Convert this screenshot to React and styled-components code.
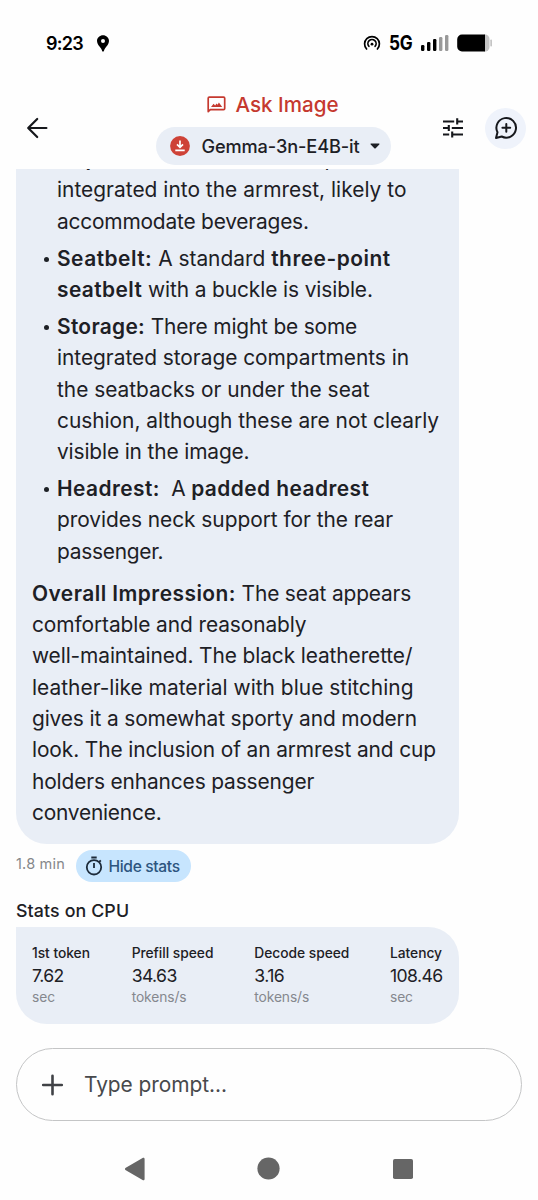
import React from 'react';
import styled, { createGlobalStyle } from 'styled-components';

const Global = createGlobalStyle`
  * { box-sizing: border-box; }
  body { margin: 0; background: #fefefe; }
  svg { display: block; flex: none; }
`;

const Screen = styled.div`
  width: 538px;
  height: 1200px;
  display: flex;
  flex-direction: column;
  overflow: hidden;
  background: #fefefe;
  color: #1d2025;
  font-family: Inter, "Liberation Sans", sans-serif;
`;

/* status bar */
const StatusBar = styled.div`
  height: 86px;
  flex: none;
  padding: 0 45px 0 46px;
  display: flex;
  align-items: center;
  justify-content: space-between;
  color: #000;
`;
const StatusGroup = styled.div`
  display: flex;
  align-items: center;
  gap: ${p => p.$gap}px;
`;
const Clock = styled.span`
  width: 39px;
  font-size: 18px;
  font-weight: 600;
  letter-spacing: -0.7px;
`;
const Network = styled.span`
  width: 24px;
  font-size: 20px;
  font-weight: 700;
  letter-spacing: -0.2px;
  transform: scaleX(0.86);
  transform-origin: left;
  white-space: nowrap;
`;

/* app header */
const Header = styled.header`
  height: 83px;
  flex: none;
  padding-left: 25px;
  display: flex;
  align-items: flex-start;
`;
const IconButton = styled.button`
  border: 0;
  padding: 0;
  width: ${p => p.$size}px;
  height: ${p => p.$size}px;
  display: grid;
  place-items: center;
  border-radius: 50%;
  color: #16181c;
  background: ${p => p.$bg || 'transparent'};
  margin: ${p => p.$margin};
`;
const Center = styled.div`
  width: 235px;
  margin-left: 106.5px;
  display: flex;
  flex-direction: column;
  align-items: center;
`;
const Title = styled.h1`
  margin: 0;
  height: 40.5px;
  padding-bottom: 3px;
  display: flex;
  align-items: center;
  gap: 9px;
  color: #c5392f;
  font-size: 20.6px;
  font-weight: 500;
  white-space: nowrap;
`;
const ModelPill = styled.button`
  border: 0;
  width: 235px;
  height: 38px;
  padding: 0 11px 0 14px;
  display: flex;
  align-items: center;
  border-radius: 19px;
  background: #e9eef6;
  color: #1d2025;
  font-family: inherit;
`;
const ModelName = styled.span`
  margin: 0 auto 0 12px;
  font-size: 18.2px;
  font-weight: 450;
  letter-spacing: -0.12px;
  white-space: nowrap;
`;

/* message */
const Bubble = styled.article`
  width: 443px;
  height: 675px;
  flex: none;
  margin-left: 16px;
  padding: 0 0 15.5px 16px;
  display: flex;
  flex-direction: column;
  justify-content: flex-end;
  overflow: hidden;
  border-radius: 0 0 31px 31px;
  background: #e9eef6;
`;
const List = styled.ul`
  margin: 0;
  padding: 0;
  list-style: none;
  display: flex;
  flex-direction: column;
  gap: 5.6px;
`;
const Item = styled.li`
  display: flex;
`;
const Bullet = styled.span`
  width: 25px;
  flex: none;
  display: flex;
  justify-content: center;
  padding: 14px 0 0 4px;
  &::before {
    content: '';
    width: 5px;
    height: 5px;
    border-radius: 50%;
    background: #1d2025;
  }
`;
const Paragraph = styled.p`
  margin: 10.6px 0 0;
`;
const TextLine = styled.span`
  display: block;
  height: 31.35px;
  line-height: 31.35px;
  font-size: 20.9px;
  white-space: pre;
  letter-spacing: ${p => p.$ls || 0}px;
`;
const Strong = styled.b`
  font-weight: 600;
  letter-spacing: ${p => p.$ls || 0}px;
`;

/* stats */
const Meta = styled.div`
  height: 51px;
  flex: none;
  padding: 6px 0 0 16px;
  display: flex;
  align-items: flex-start;
`;
const Duration = styled.span`
  width: 59.5px;
  line-height: 27px;
  font-size: 14.5px;
  letter-spacing: 0.2px;
  color: #85878a;
`;
const StatsToggle = styled.button`
  border: 0;
  width: 115px;
  height: 32px;
  padding: 0 0 0 8px;
  display: flex;
  align-items: center;
  gap: 5px;
  border-radius: 16px;
  background: #c7e5fe;
  color: #2d5580;
  font-family: inherit;
  font-size: 15.6px;
  font-weight: 450;
  letter-spacing: -0.35px;
  white-space: nowrap;
`;
const StatsTitle = styled.h2`
  flex: none;
  margin: 0 0 0 16px;
  height: 31.5px;
  line-height: 32px;
  font-size: 17.8px;
  font-weight: 450;
  letter-spacing: 0.12px;
`;
const StatsCard = styled.section`
  width: 443px;
  height: 97.5px;
  flex: none;
  margin-left: 16px;
  padding: 16px 15.5px 0 16px;
  display: flex;
  justify-content: space-between;
  border-radius: 0 31px 31px 31px;
  background: #e9eef6;
`;
const Stat = styled.div`
  width: ${p => p.$w}px;
  display: flex;
  flex-direction: column;
  white-space: nowrap;
`;
const StatLabel = styled.span`
  line-height: 21px;
  font-size: 13.8px;
  font-weight: 480;
  letter-spacing: -0.03px;
`;
const StatValue = styled.span`
  line-height: 23px;
  font-size: 17.6px;
  letter-spacing: -0.6px;
`;
const StatUnit = styled.span`
  line-height: 20px;
  font-size: 13.8px;
  letter-spacing: -0.1px;
  color: #85888e;
`;

/* prompt and navigation */
const Prompt = styled.div`
  width: 506px;
  height: 73px;
  flex: none;
  margin: 24px 0 0 16px;
  padding-left: 23px;
  display: flex;
  align-items: center;
  gap: 19px;
  border: 1.5px solid #c4c5c6;
  border-radius: 37px;
`;
const Placeholder = styled.span`
  font-size: 20.9px;
  letter-spacing: -0.05px;
  color: #47494c;
`;
const NavBar = styled.nav`
  height: 79px;
  flex: none;
  padding: 16px 67.5px 0;
  display: grid;
  grid-template-columns: repeat(3, 134px);
  justify-items: center;
  align-items: center;
  color: #666;
`;

const items = [
  [
    { t: [['Cup Holders:', 1], [' There are cup holders']], b: 0.2, ls: 0.15 },
    { t: [['integrated into the armrest, likely to']], ls: 0.02 },
    { t: [['accommodate beverages.']], ls: -0.2 },
  ],
  [
    { t: [['Seatbelt:', 1], [' A standard '], ['three-point', 1]], b: 0.5 },
    { t: [['seatbelt', 1], [' with a buckle is visible.']], ls: -0.1, b: 0.4 },
  ],
  [
    { t: [['Storage:', 1], [' There might be some']], ls: -0.18, b: 0.3 },
    { t: [['integrated storage compartments in']], ls: -0.03 },
    { t: [['the seatbacks or under the seat']], ls: -0.02 },
    { t: [['cushion, although these are not clearly']], ls: -0.03 },
    { t: [['visible in the image.']], ls: -0.14 },
  ],
  [
    { t: [['Headrest:', 1], ['  A '], ['padded headrest', 1]], b: 0.45, ls: -0.2 },
    { t: [['provides neck support for the rear']], ls: -0.04 },
    { t: [['passenger.']], ls: -0.25 },
  ],
];

const impression = [
  { t: [['Overall Impression:', 1], [' The seat appears']], ls: -0.16, b: 0.47 },
  { t: [['comfortable and reasonably']], ls: -0.09 },
  { t: [['well-maintained. The black leatherette/']], ls: -0.11 },
  { t: [['leather-like material with blue stitching']], ls: 0.02 },
  { t: [['gives it a somewhat sporty and modern']], ls: -0.13 },
  { t: [['look. The inclusion of an armrest and cup']], ls: -0.11 },
  { t: [['holders enhances passenger']], ls: -0.14 },
  { t: [['convenience.']], ls: -0.22 },
];

const stats = [
  { label: '1st token', value: '7.62', unit: 'sec', w: 58 },
  { label: 'Prefill speed', value: '34.63', unit: 'tokens/s', w: 81 },
  { label: 'Decode speed', value: '3.16', unit: 'tokens/s', w: 94 },
  { label: 'Latency', value: '108.46', unit: 'sec', w: 53.5 },
];

const Lines = ({ lines }) =>
  lines.map((line, i) => (
    <TextLine key={i} $ls={line.ls}>
      {line.t.map(([text, bold], j) =>
        bold ? <Strong key={j} $ls={line.b}>{text}</Strong> : text
      )}
    </TextLine>
  ));

const PinIcon = () => (
  <svg width="12" height="17" viewBox="0 0 12 17">
    <path fillRule="evenodd" fill="currentColor" d="M6 .3C2.800.3 0 2.800 0 6c0 3 2.300 5.200 3.700 7 .8 1 1.100 1.800 1.400 2.900.2.900 1.600.900 1.800 0 .3-1.100.6-1.900 1.400-2.900C9.700 11.200 12 9 12 6 12 2.800 9.200.3 6 .3Zm0 3.700a2 2 0 1 1 0 4 2 2 0 0 1 0-4Z" />
  </svg>
);
const HotspotIcon = () => (
  <svg width="18" height="18" viewBox="0 0 18 18" fill="none" stroke="currentColor" strokeWidth="1.7" strokeLinecap="round">
    <path d="M3.600 15A7.400 7.400 0 1 1 14.400 15" />
    <path d="M5.900 12.300A4.100 4.100 0 1 1 12.100 12.300" />
    <circle cx="9" cy="10.200" r="1.400" fill="currentColor" stroke="none" />
  </svg>
);
const SignalIcon = () => (
  <svg width="28" height="16" viewBox="0 0 28 16">
    <g fill="#000">
      <rect x="0" y="10" width="3.400" height="6" rx="1.200" />
      <rect x="6" y="7" width="3.400" height="9" rx="1.200" />
      <rect x="12" y="4" width="3.400" height="12" rx="1.200" />
    </g>
    <g fill="#999">
      <rect x="18" y="2" width="3.400" height="14" rx="1.200" />
      <rect x="24" y="0" width="3.400" height="16" rx="1.200" />
    </g>
  </svg>
);
const BatteryIcon = () => (
  <svg width="36" height="18" viewBox="0 0 36 18">
    <path d="M27 .5h1a4.500 4.500 0 0 1 4.500 4.500v8a4.500 4.500 0 0 1-4.500 4.500h-1Z" fill="#c4c4c4" />
    <path d="M5 .5h23v17H5A4.800 4.800 0 0 1 .2 12.700V5.300A4.800 4.800 0 0 1 5 .5Z" fill="#000" />
    <rect x="33.300" y="5.500" width="1.700" height="7" rx=".8" fill="#c4c4c4" />
  </svg>
);
const BackIcon = () => (
  <svg width="24" height="24" viewBox="0 0 24 24" fill="none" stroke="currentColor" strokeWidth="2.200" strokeLinecap="round" strokeLinejoin="round">
    <path d="M21.400 12H3.300M12.200 3 3.200 12l9 9" />
  </svg>
);
const ImageChatIcon = () => (
  <svg width="19" height="18" viewBox="0 0 19 18" fill="none">
    <path d="M1.200 15.600V2.300c0-.7.4-1.100 1.100-1.100h14.300c.7 0 1.100.4 1.100 1.100v10.200c0 .7-.4 1.100-1.100 1.100H3.300Z" stroke="currentColor" strokeWidth="1.700" strokeLinejoin="round" />
    <path d="M4 11.100 6.600 7.700l1.500 1.900 1.500-2.200 1 1.400 1.300-2.300 3.300 4.600Z" fill="currentColor" />
  </svg>
);
const DownloadIcon = () => (
  <svg width="20" height="20" viewBox="0 0 20 20">
    <circle cx="10" cy="10" r="9.900" fill="#ce4237" />
    <path d="M10 4.500v6.300M7 8.400l3 3 3-3M5.300 14.400h9.400" fill="none" stroke="#fff" strokeWidth="1.700" />
  </svg>
);
const CaretIcon = () => (
  <svg width="10" height="6" viewBox="0 0 10 6">
    <path d="M1.200.5h7.600c.6 0 .9.600.5 1L5.700 5.200c-.4.400-1 .4-1.400 0L.7 1.500C.3 1.100.6.5 1.200.5Z" fill="currentColor" />
  </svg>
);
const TuneIcon = () => (
  <svg width="24" height="24" viewBox="0 0 24 24" fill="none" stroke="currentColor" strokeWidth="2.100">
    <path d="M2 5.500h11.200M16.200 5.500H22M16.200 2.300v6.200M2 12h5.800M7.800 9v6M10.800 12H22M2 18.500h6.200M11.200 18.500H22M11.200 15.400v6.200" />
  </svg>
);
const NewChatIcon = () => (
  <svg width="24" height="24" viewBox="0 0 24 24" fill="none" stroke="currentColor" strokeWidth="2" strokeLinecap="round" strokeLinejoin="round">
    <path d="M2 22l1.500-5.700A9.800 9.800 0 1 1 7.700 20.500Z" />
    <path d="M12.300 7.900v7.800M8.400 11.800h7.800" />
  </svg>
);
const TimerIcon = () => (
  <svg width="20" height="20" viewBox="0 0 20 20" fill="none" stroke="#1d2b3a" strokeWidth="1.800">
    <circle cx="10" cy="11.300" r="7.200" />
    <path d="M7.300 1.500h5.400M10 7v5M15.200 6l1.600-1.600" />
  </svg>
);
const PlusIcon = () => (
  <svg width="25" height="24" viewBox="0 0 25 24" fill="none" stroke="#404246" strokeWidth="2.600" strokeLinecap="round">
    <path d="M12.500 2.700v18.600M3.200 12h18.600" />
  </svg>
);

export default function App() {
  return (
    <Screen>
      <Global />
      <StatusBar>
        <StatusGroup $gap={12}>
          <Clock>9:23</Clock>
          <PinIcon />
        </StatusGroup>
        <StatusGroup $gap={8}>
          <HotspotIcon />
          <Network>5G</Network>
          <SignalIcon />
          <BatteryIcon />
        </StatusGroup>
      </StatusBar>
      <Header>
        <IconButton $size={24} $margin="29.500px 0 0" aria-label="Back"><BackIcon /></IconButton>
        <Center>
          <Title>
            <ImageChatIcon />
            <span>Ask Image</span>
          </Title>
          <ModelPill>
            <DownloadIcon />
            <ModelName>Gemma-3n-E4B-it</ModelName>
            <CaretIcon />
          </ModelPill>
        </Center>
        <IconButton $size={24} $margin="29.500px 0 0 50.500px" aria-label="Settings"><TuneIcon /></IconButton>
        <IconButton $size={41} $margin="21.500px 0 0 20px" $bg="#eff3fb" aria-label="New chat"><NewChatIcon /></IconButton>
      </Header>
      <Bubble>
        <List>
          {items.map((lines, i) => (
            <Item key={i}>
              <Bullet />
              <div><Lines lines={lines} /></div>
            </Item>
          ))}
        </List>
        <Paragraph><Lines lines={impression} /></Paragraph>
      </Bubble>
      <Meta>
        <Duration>1.8 min</Duration>
        <StatsToggle><TimerIcon />Hide stats</StatsToggle>
      </Meta>
      <StatsTitle>Stats on CPU</StatsTitle>
      <StatsCard>
        {stats.map(s => (
          <Stat key={s.label} $w={s.w}>
            <StatLabel>{s.label}</StatLabel>
            <StatValue>{s.value}</StatValue>
            <StatUnit>{s.unit}</StatUnit>
          </Stat>
        ))}
      </StatsCard>
      <Prompt>
        <PlusIcon />
        <Placeholder>Type prompt...</Placeholder>
      </Prompt>
      <NavBar>
        <svg width="22" height="24" viewBox="0 0 22 24">
          <path d="M1.800 10.700 18.600.9c1-.5 2 0 2 1.100v20c0 1.100-1 1.600-2 1.100L1.800 13.300c-1.100-.6-1.100-2 0-2.600Z" fill="currentColor" />
        </svg>
        <svg width="23" height="23" viewBox="0 0 23 23"><circle cx="11.500" cy="11.500" r="11.100" fill="currentColor" /></svg>
        <svg width="20" height="20" viewBox="0 0 20 20"><rect width="20" height="20" rx="1.800" fill="currentColor" /></svg>
      </NavBar>
    </Screen>
  );
}
